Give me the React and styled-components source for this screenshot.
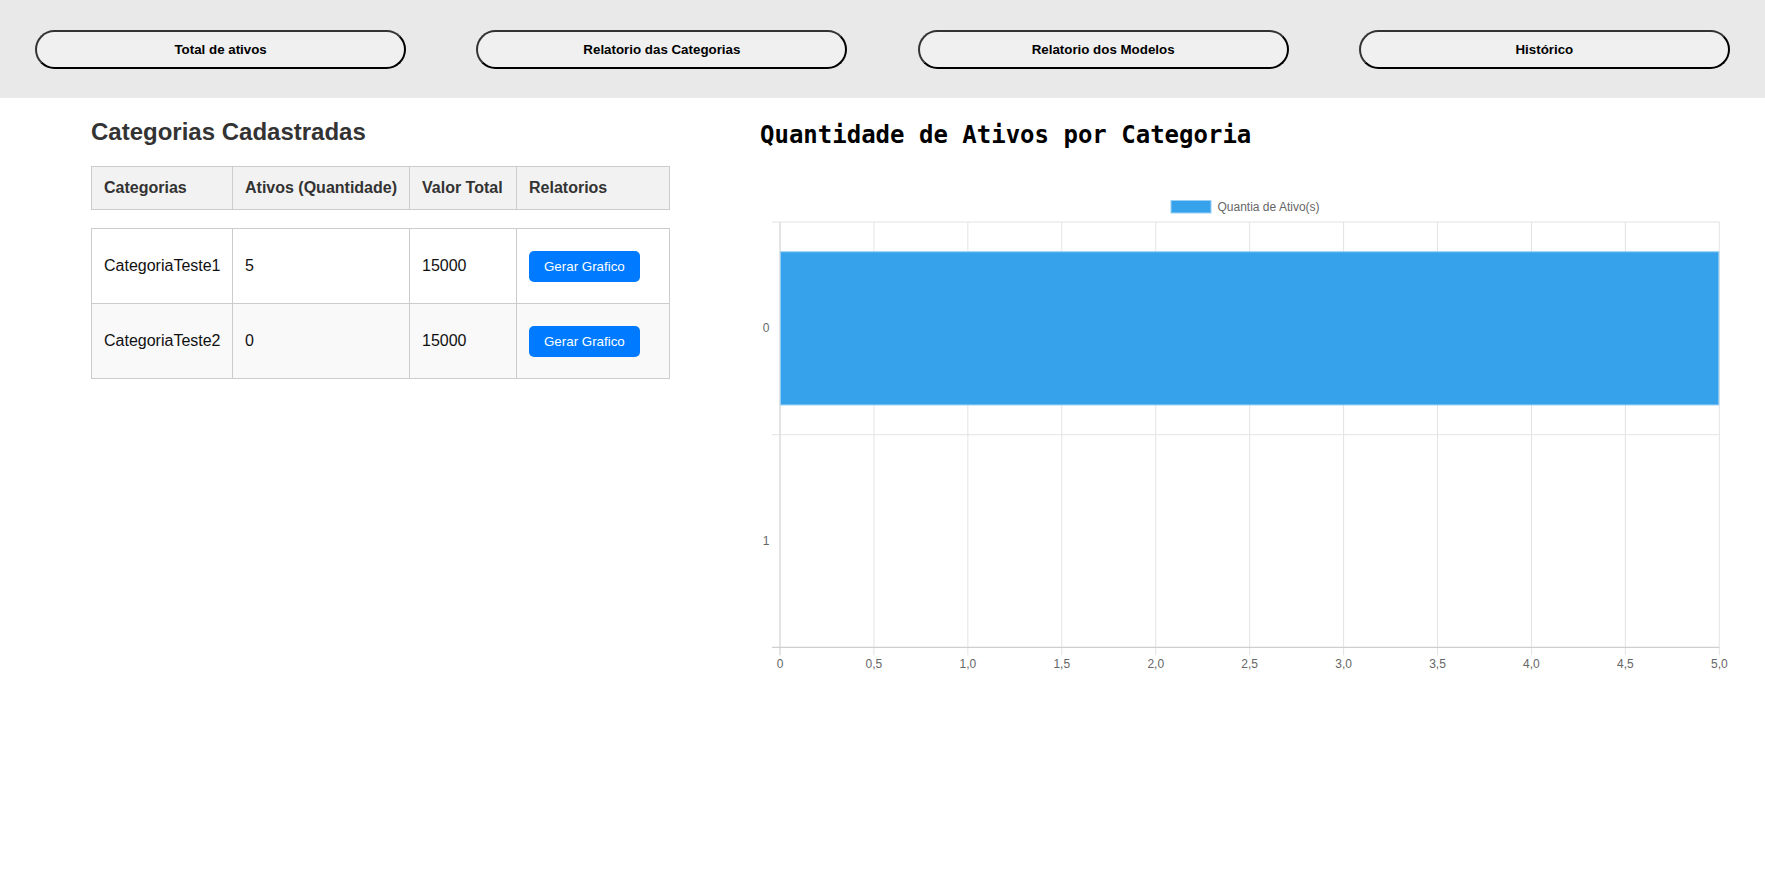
import React from 'react';
import styled, { createGlobalStyle } from 'styled-components';

const GlobalStyle = createGlobalStyle`
  body {
    margin: 0;
    background: #fff;
    font-family: 'Liberation Sans', Arial, sans-serif;
  }
`

const navItems = ['Total de ativos', 'Relatorio das Categorias', 'Relatorio dos Modelos', 'Histórico'];

const categorias = [
  { nome: 'CategoriaTeste1', ativos: 5, valor: 15000 },
  { nome: 'CategoriaTeste2', ativos: 0, valor: 15000 },
];

// chart geometry (px inside the svg)
const CHART_W = 988;
const CHART_H = 490;
const PLOT = { left: 20, right: 959.3, top: 32, bottom: 457.4 };
const X_MAX = 5;
const X_STEP = 0.5;

const BarChart = ({ data }) => {
  const plotW = PLOT.right - PLOT.left;
  const band = (PLOT.bottom - PLOT.top) / data.length;
  const xOf = (v) => PLOT.left + (v / X_MAX) * plotW;
  const ticks = [];
  for (let v = 0; v <= X_MAX + 0.001; v += X_STEP) ticks.push(Math.round(v * 10) / 10);

  return (
    <svg width={CHART_W} height={CHART_H} viewBox={`0 0 ${CHART_W} ${CHART_H}`}>
      {/* legend */}
      <rect x="411" y="10.5" width="40" height="12.5" fill="#36a2eb" stroke="#9ad0f5" strokeWidth="1" />
      <text x="457.5" y="21" fontSize="12" fill="#666" fontFamily="Liberation Sans, Arial, sans-serif">
        Quantia de Ativo(s)
      </text>

      {/* vertical grid */}
      {ticks.map((v, i) => (
        <line
          key={'vx' + i}
          x1={xOf(v)} x2={xOf(v)}
          y1={PLOT.top} y2={PLOT.bottom + 8}
          stroke={i === 0 ? '#c8c8c8' : '#e3e3e3'}
          strokeWidth="1"
        />
      ))}

      {/* horizontal grid (category edges) */}
      {data.map((_, i) => (
        <line
          key={'hy' + i}
          x1={PLOT.left - 8} x2={PLOT.right}
          y1={PLOT.top + i * band} y2={PLOT.top + i * band}
          stroke="#e3e3e3"
          strokeWidth="1"
        />
      ))}
      <line x1={PLOT.left - 8} x2={PLOT.right} y1={PLOT.bottom} y2={PLOT.bottom} stroke="#cfcfcf" strokeWidth="1.2" />

      {/* bars */}
      {data.map((d, i) => {
        const h = band * 0.72;
        const y = PLOT.top + i * band + (band - h) / 2;
        const w = xOf(d.ativos) - PLOT.left;
        if (w <= 0) return null;
        return (
          <rect key={'b' + i} x={PLOT.left + 0.5} y={y} width={w - 1} height={h} fill="#36a2eb" stroke="#8fcbf3" strokeWidth="1" />
        );
      })}

      {/* y labels */}
      {data.map((_, i) => (
        <text
          key={'yl' + i}
          x="9.5" y={PLOT.top + i * band + band / 2 + 4}
          textAnchor="end" fontSize="12" fill="#666"
          fontFamily="Liberation Sans, Arial, sans-serif"
        >
          {i}
        </text>
      ))}

      {/* x labels */}
      {ticks.map((v, i) => (
        <text
          key={'xl' + i}
          x={xOf(v)} y={PLOT.bottom + 21}
          textAnchor="middle" fontSize="12" fill="#666"
          fontFamily="Liberation Sans, Arial, sans-serif"
        >
          {v === 0 ? '0' : v.toFixed(1).replace('.', ',')}
        </text>
      ))}
    </svg>
  );
}

export default function App() {
  return (
    <>
      <GlobalStyle />
      <Header>
        {navItems.map((item) => (
          <NavButton key={item}>{item}</NavButton>
        ))}
      </Header>

      <Main>
        <LeftSection>
          <Title>Categorias Cadastradas</Title>
          <Table>
            <colgroup>
              <col style={{ width: 141 }} />
              <col style={{ width: 177 }} />
              <col style={{ width: 107 }} />
              <col style={{ width: 153 }} />
            </colgroup>
            <thead>
              <tr>
                <Th>Categorias</Th>
                <Th>Ativos (Quantidade)</Th>
                <Th>Valor Total</Th>
                <Th>Relatorios</Th>
              </tr>
            </thead>
            <tbody>
              <tr>
                <Spacer colSpan={4} />
              </tr>
              {categorias.map((c, i) => (
                <Row key={c.nome} $striped={i % 2 === 1}>
                  <Td>{c.nome}</Td>
                  <Td>{c.ativos}</Td>
                  <Td>{c.valor}</Td>
                  <Td>
                    <ChartButton>Gerar Grafico</ChartButton>
                  </Td>
                </Row>
              ))}
            </tbody>
          </Table>
        </LeftSection>

        <RightSection>
          <ChartTitle>Quantidade de Ativos por Categoria</ChartTitle>
          <ChartBox>
            <BarChart data={categorias} />
          </ChartBox>
        </RightSection>
      </Main>
    </>
  );
}

const Header = styled.header`
  height: 98px;
  background: #e9e9e9;
  display: flex;
  align-items: center;
  justify-content: space-around;
`

const NavButton = styled.button`
  width: 371px;
  height: 39px;
  border: 2px solid #333;
  border-bottom-color: #000;
  border-right-color: #000;
  border-radius: 20px;
  background: #f0f0f0;
  color: #000;
  font-family: 'Liberation Sans', Arial, sans-serif;
  font-size: 13.333px;
  font-weight: 700;
  cursor: pointer;
`

const Main = styled.main`
  display: flex;
  padding: 0 17px 0 91px;
  gap: 91px;
`

const LeftSection = styled.section`
  width: 578px;
  flex-shrink: 0;
`

const RightSection = styled.section`
  flex: 1;
`

const Title = styled.h2`
  margin: 20px 0;
  font-size: 24px;
  font-weight: 700;
  color: #333;
`

const ChartTitle = styled.h2`
  margin: 23px 0 0 0;
  font-family: 'DejaVu Sans Mono', 'Liberation Mono', monospace;
  font-size: 24px;
  line-height: 28px;
  font-weight: 700;
  color: #000;
`

const ChartBox = styled.div`
  margin-top: 41px;
  line-height: 0;
`

const Table = styled.table`
  width: 578px;
  table-layout: fixed;
  border-collapse: collapse;
  font-size: 16px;
`

const Th = styled.th`
  background: #f2f2f2;
  border: 1px solid #ccc;
  padding: 12px;
  text-align: left;
  font-weight: 700;
  color: #333;
  white-space: nowrap;
`

const Spacer = styled.td`
  height: 18px;
  padding: 0;
  border: none;
`

const Row = styled.tr`
  background: ${(p) => (p.$striped ? '#f9f9f9' : '#fff')};
`

const Td = styled.td`
  height: 74px;
  padding: 0 12px;
  border: 1px solid #ccc;
  color: #111;
  vertical-align: middle;
  white-space: nowrap;
`

const ChartButton = styled.button`
  height: 31px;
  padding: 0 15px;
  border: none;
  border-radius: 5px;
  background: #007bff;
  color: #fff;
  font-family: 'Liberation Sans', Arial, sans-serif;
  font-size: 13.333px;
  cursor: pointer;
`
